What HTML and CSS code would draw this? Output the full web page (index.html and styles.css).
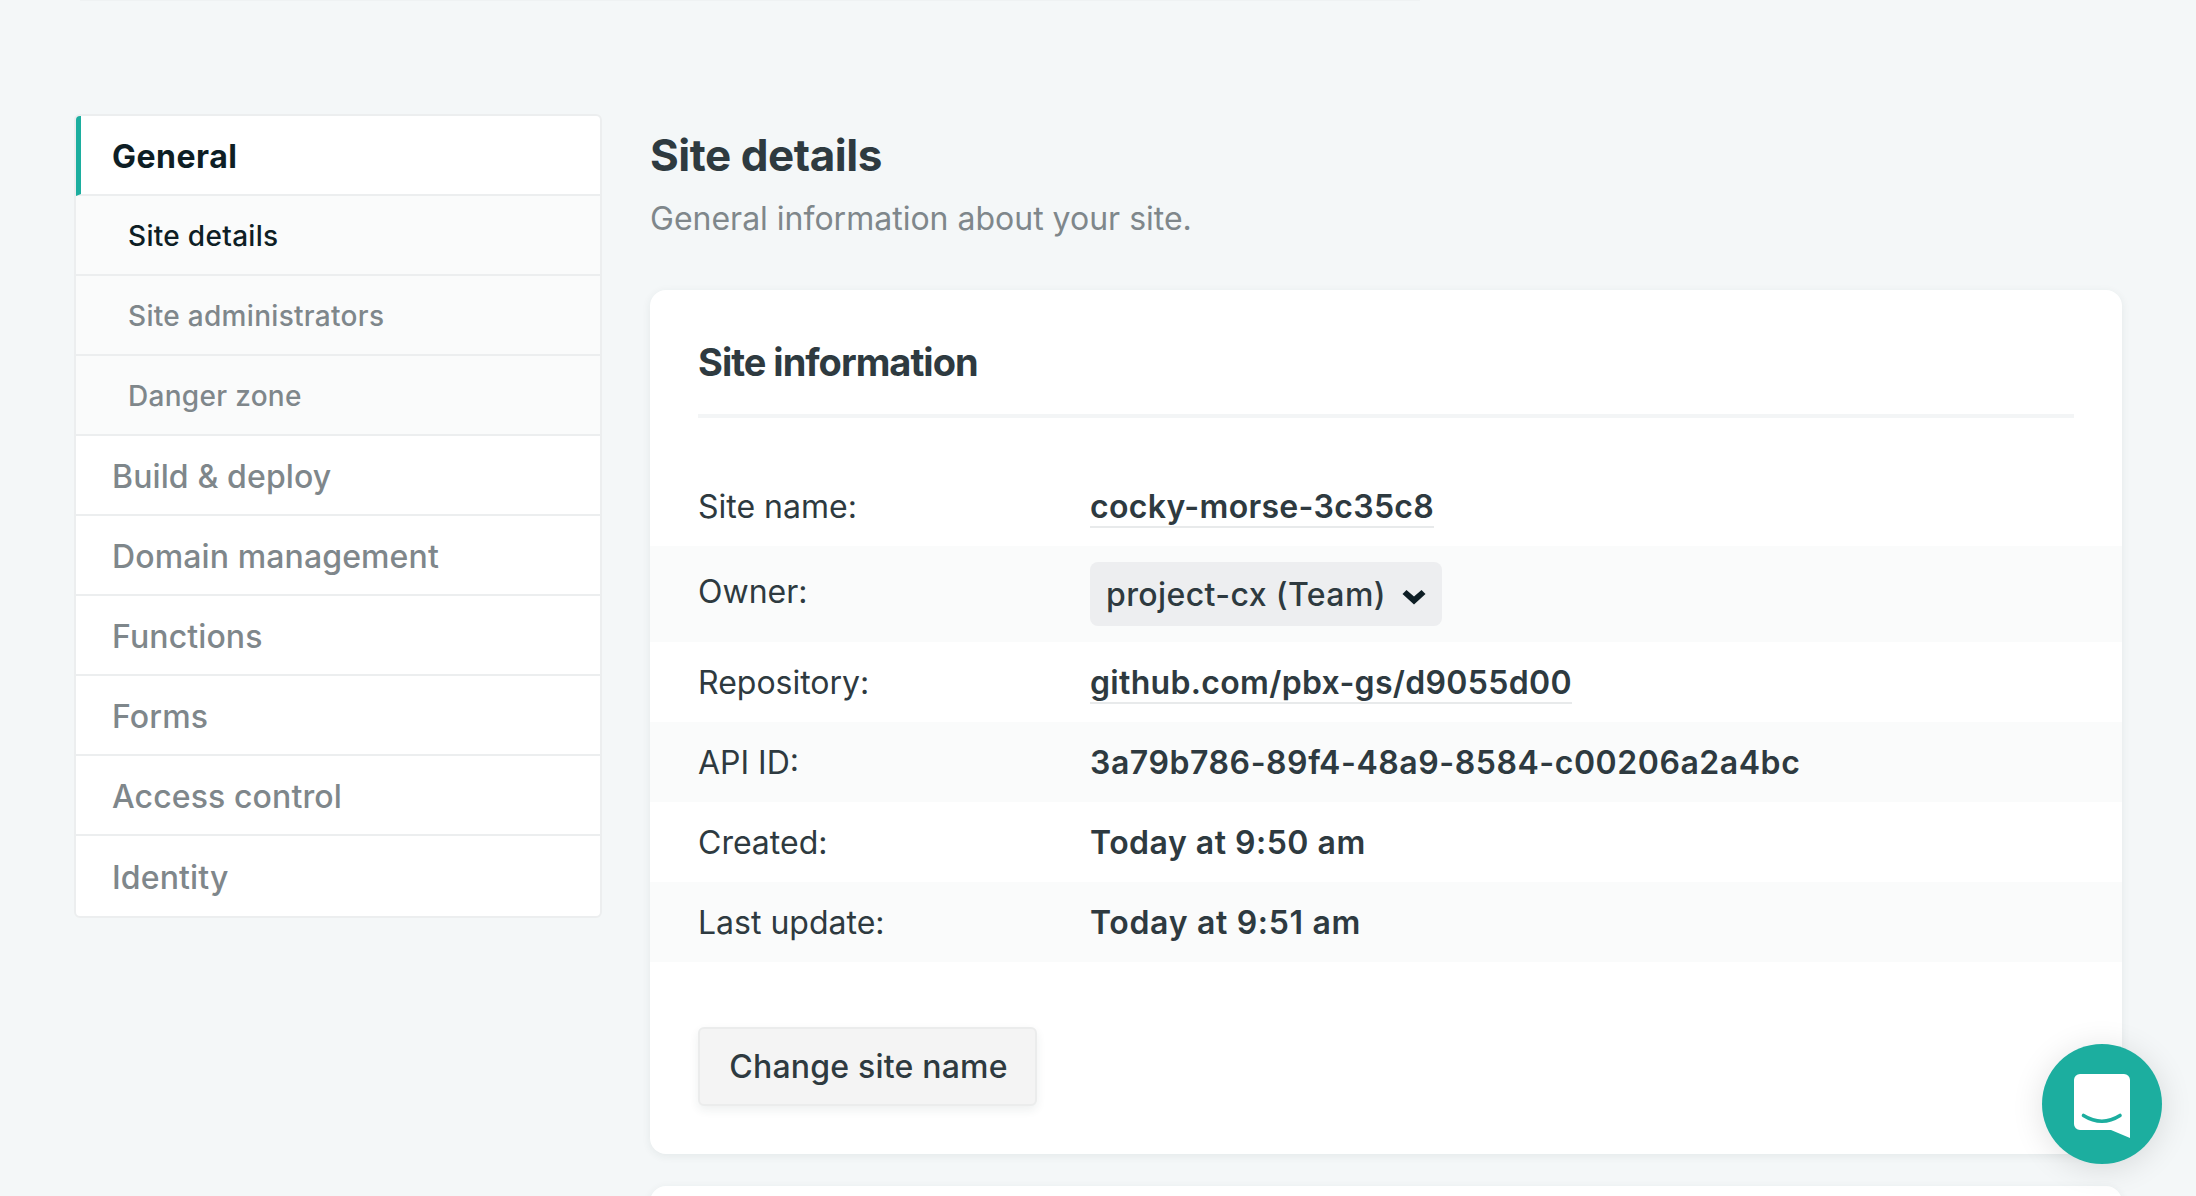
FILE: index.html
```html
<!DOCTYPE html>
<html lang="en">
<head>
<meta charset="utf-8">
<title>Site details</title>
<link rel="stylesheet" href="styles.css">
</head>
<body>
<div class="topbar"></div>
<div class="layout">
  <nav class="sidenav">
    <a class="nav-item active">General</a>
    <a class="nav-sub current">Site details</a>
    <a class="nav-sub">Site administrators</a>
    <a class="nav-sub">Danger zone</a>
    <a class="nav-item">Build &amp; deploy</a>
    <a class="nav-item">Domain management</a>
    <a class="nav-item">Functions</a>
    <a class="nav-item">Forms</a>
    <a class="nav-item">Access control</a>
    <a class="nav-item last">Identity</a>
  </nav>
  <main class="content">
    <h1 class="page-title">Site details</h1>
    <p class="page-sub">General information about your site.</p>
    <section class="card">
      <h2 class="card-title">Site information</h2>
      <dl class="info">
        <div class="row"><dt>Site name:</dt><dd><a class="link">cocky-morse-3c35c8</a></dd></div>
        <div class="row band owner"><dt>Owner:</dt><dd><span class="select">project-cx (Team)<svg class="chev" viewBox="0 0 24 16" width="24" height="16"><path d="M0.5 5 L4.5 1 L12 7.5 L19.5 1 L23.5 5 L12 15.5 Z" fill="#0e1e25"/></svg></span></dd></div>
        <div class="row"><dt>Repository:</dt><dd><a class="link">github.com/pbx-gs/d9055d00</a></dd></div>
        <div class="row band"><dt>API ID:</dt><dd class="mono-id">3a79b786-89f4-48a9-8584-c00206a2a4bc</dd></div>
        <div class="row"><dt>Created:</dt><dd class="stamp">Today at 9:50 am</dd></div>
        <div class="row band"><dt>Last update:</dt><dd class="stamp wide">Today at 9:51 am</dd></div>
      </dl>
      <button class="btn">Change site name</button>
    </section>
    <section class="card next"></section>
  </main>
</div>
<button class="chat" aria-label="Chat">
  <svg viewBox="0 0 120 120" width="120" height="120">
    <path d="M38 30 H82 A6 6 0 0 1 88 36 V94 L69 86 H38 A6 6 0 0 1 32 80 V36 A6 6 0 0 1 38 30 Z" fill="#fff"/>
    <path d="M41.5 71.5 Q60 83 78 71.5" fill="none" stroke="#1cae9f" stroke-width="3.6" stroke-linecap="round"/>
  </svg>
</button>
</body>
</html>
```
FILE: styles.css
```css
* { box-sizing: border-box; }
html, body { margin: 0; height: 1196px; overflow: hidden; }
body {
  background: #f4f7f8;
  color: #2e3a40;
  font-family: Inter, "Liberation Sans", sans-serif;
  font-size: 32px;
}
.topbar {
  height: 1px;
  margin: 0 776px 0 80px;
  background: #eff2f3;
}
.layout {
  display: grid;
  grid-template-columns: 528px 1472px;
  column-gap: 48px;
  padding: 113px 74px 0 74px;
}
.sidenav {
  align-self: start;
  display: flex;
  flex-direction: column;
  border: 2px solid #eceeef;
  border-radius: 6px;
  background: #fff;
  overflow: hidden;
}
.nav-item, .nav-sub {
  display: flex;
  align-items: center;
  height: 80px;
  padding-top: 2px;
  border-bottom: 2px solid #eceeef;
  color: #7f878b;
  font-weight: 500;
  letter-spacing: .12px;
}
.nav-item { padding-left: 36px; }
.nav-item.last { border-bottom: 0; }
.nav-item.active {
  padding-left: 31px;
  border-left: 5px solid #1cae9f;
  color: #0e1e25;
  font-weight: 700;
  letter-spacing: .5px;
}
.nav-sub {
  padding-left: 52px;
  font-size: 28px;
  letter-spacing: .3px;
  background: #fafbfb;
}
.nav-sub.current { color: #0e1e25; }
.page-title {
  margin: 14px 0 0;
  font-size: 44px;
  line-height: 54px;
  font-weight: 700;
  letter-spacing: -.45px;
}
.page-sub {
  margin: 13px 0 0;
  font-size: 32px;
  line-height: 48px;
  color: #7f878b;
}
.card {
  margin-top: 47px;
  padding: 48px;
  border-radius: 16px;
  background: #fff;
  box-shadow: 0 2px 8px rgba(40, 60, 70, .08);
}
.card.next { margin-top: 32px; height: 200px; }
.card-title {
  margin: 0;
  padding-bottom: 28px;
  border-bottom: 4px solid #f3f5f6;
  font-size: 38px;
  line-height: 48px;
  font-weight: 700;
  letter-spacing: -1px;
}
.info { margin: 48px -48px 0; }
.row {
  display: flex;
  align-items: center;
  height: 80px;
  padding: 1px 48px 0;
}
.row.band { background: #fafbfb; }
.row.owner { height: 96px; align-items: flex-start; padding-top: 16px; }
.row dt { width: 392px; flex: none; }
.row dd { margin: 0; font-weight: 600; letter-spacing: .32px; }
.row dd.mono-id { letter-spacing: .55px; }
.row dd.stamp { letter-spacing: .5px; }
.row dd.stamp.wide { letter-spacing: .68px; }
.row.owner dt { line-height: 48px; margin-top: 6px; }
.link { border-bottom: 2px solid #e8eaeb; }
.select {
  display: inline-flex;
  align-items: center;
  height: 64px;
  padding: 0 16px;
  border-radius: 8px;
  background: #edeef0;
  font-weight: 500;
  letter-spacing: .4px;
}
.chev { margin: 6px 0 0 16px; }
.btn {
  display: block;
  margin-top: 65px;
  width: 339px;
  height: 79px;
  padding: 0 0 0 2px;
  border: 2px solid #ebecec;
  border-radius: 6px;
  background: #f4f4f4;
  box-shadow: 0 4px 10px rgba(40, 60, 70, .08);
  color: #2e3a40;
  font: 500 32px Inter, "Liberation Sans", sans-serif;
  letter-spacing: .2px;
}
.chat {
  position: fixed;
  left: 2042px;
  top: 1044px;
  width: 120px;
  height: 120px;
  padding: 0;
  border: 0;
  border-radius: 50%;
  background: #1cae9f;
  box-shadow: 0 4px 32px rgba(0, 0, 0, .12);
}
.chat svg { display: block; }
```
